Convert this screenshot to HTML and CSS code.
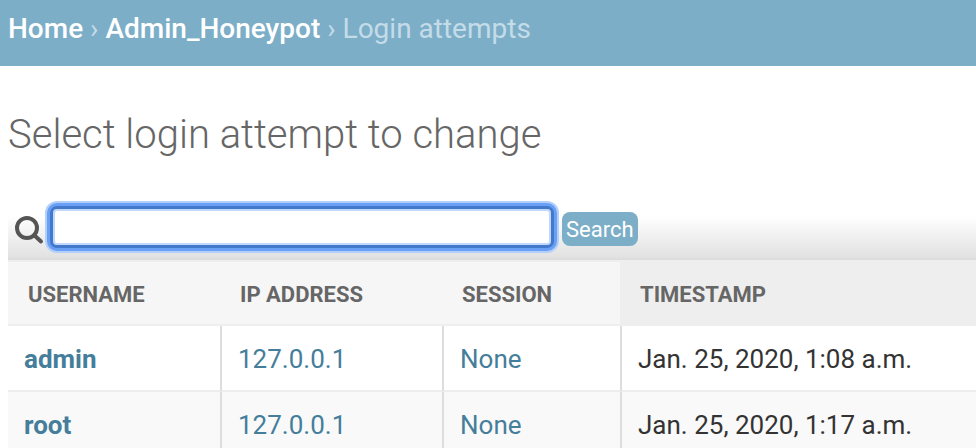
FILE: index.html
```html
<!DOCTYPE html>
<html lang="en">
<head>
<meta charset="utf-8">
<title>Select login attempt to change</title>
<link rel="stylesheet" href="styles.css">
</head>
<body>
<nav class="breadcrumbs" aria-label="Breadcrumbs"><a href="#">Home</a> › <a href="#">Admin_Honeypot</a> › Login attempts</nav>
<main class="content">
  <h1>Select login attempt to change</h1>
  <form class="toolbar">
    <label for="searchbar" aria-label="Search login attempts">
      <svg class="search-icon" viewBox="0 0 30 30" aria-hidden="true">
        <circle cx="13" cy="13" r="10" />
        <path d="M20 20L27 26.500" />
      </svg>
    </label>
    <input class="searchbar" id="searchbar" type="text">
    <button class="search-button" type="submit">Search</button>
  </form>
  <table class="results">
    <colgroup><col class="col-username"><col class="col-ip"><col class="col-session"><col></colgroup>
    <thead>
      <tr><th scope="col">Username</th><th scope="col">IP address</th><th scope="col">Session</th><th scope="col" class="sorted">Timestamp</th></tr>
    </thead>
    <tbody>
      <tr><th scope="row"><a href="#">admin</a></th><td><a href="#">127.0.0.1</a></td><td><a href="#">None</a></td><td>Jan. 25, 2020, 1:08 a.m.</td></tr>
      <tr><th scope="row"><a href="#">root</a></th><td><a href="#">127.0.0.1</a></td><td><a href="#">None</a></td><td>Jan. 25, 2020, 1:17 a.m.</td></tr>
    </tbody>
  </table>
</main>
</body>
</html>
```

FILE: styles.css
```css
* {
  box-sizing: border-box;
}

html {
  overflow: hidden;
}

body {
  margin: 0;
  background: #fff;
  color: #333;
  font: 26px/32px Roboto, "Liberation Sans", sans-serif;
}

a {
  color: #447e9b;
  text-decoration: none;
}

.breadcrumbs {
  padding: 13px 8px 21px;
  background: #7caec8;
  color: #c4dce8;
  font-size: 28px;
}

.breadcrumbs a {
  color: #fff;
  font-weight: 500;
}

.content {
  padding-left: 8px;
}

h1 {
  margin: 0;
  padding: 45px 0 43px;
  color: #666;
  font-size: 40px;
  font-weight: 300;
  line-height: 48px;
}

.toolbar {
  display: flex;
  align-items: center;
  height: 58px;
  padding: 0 6px;
  border-bottom: 2px solid #ddd;
  background: linear-gradient(#fff 25%, #e1e1e1);
}

.toolbar label {
  display: flex;
}

.search-icon {
  width: 30px;
  height: 30px;
  fill: none;
  stroke: #555;
  stroke-width: 4;
  stroke-linecap: round;
}

.searchbar {
  width: 504px;
  height: 42px;
  margin: 0 8px 6px 6px;
  padding: 4px 8px;
  border: 3px solid #4379cb;
  border-radius: 7px;
  outline: 0;
  background: #fff;
  box-shadow: 0 0 0 3px #699ff4, 0 0 0 5px #b4d0fa, inset 0 0 0 2px #c0d8fb;
  color: #333;
  font: inherit;
}

.search-button {
  height: 34px;
  margin-bottom: 2px;
  padding: 2px 4px 0;
  border: 0;
  border-radius: 8px;
  background: #7caec8;
  color: #fff;
  font: 22px/32px Roboto, "Liberation Sans", sans-serif;
}

.results {
  width: 100%;
  border-collapse: separate;
  border-spacing: 0;
  table-layout: fixed;
}

.col-username {
  width: 212px;
}

.col-ip {
  width: 222px;
}

.col-session {
  width: 178px;
}

.results th,
.results td {
  padding: 17px 16px 15px;
  border-bottom: 2px solid #eee;
  text-align: left;
  white-space: nowrap;
}

.results td {
  border-left: 2px solid #ddd;
}

.results thead th {
  padding: 17px 20px 13px;
  border-top: 2px solid #eee;
  background: #f6f6f6;
  color: #666;
  font-size: 22px;
  text-transform: uppercase;
}

.results thead .sorted {
  background: #eee;
}

.results tbody tr:nth-child(even) {
  background: #f9f9f9;
}
```
